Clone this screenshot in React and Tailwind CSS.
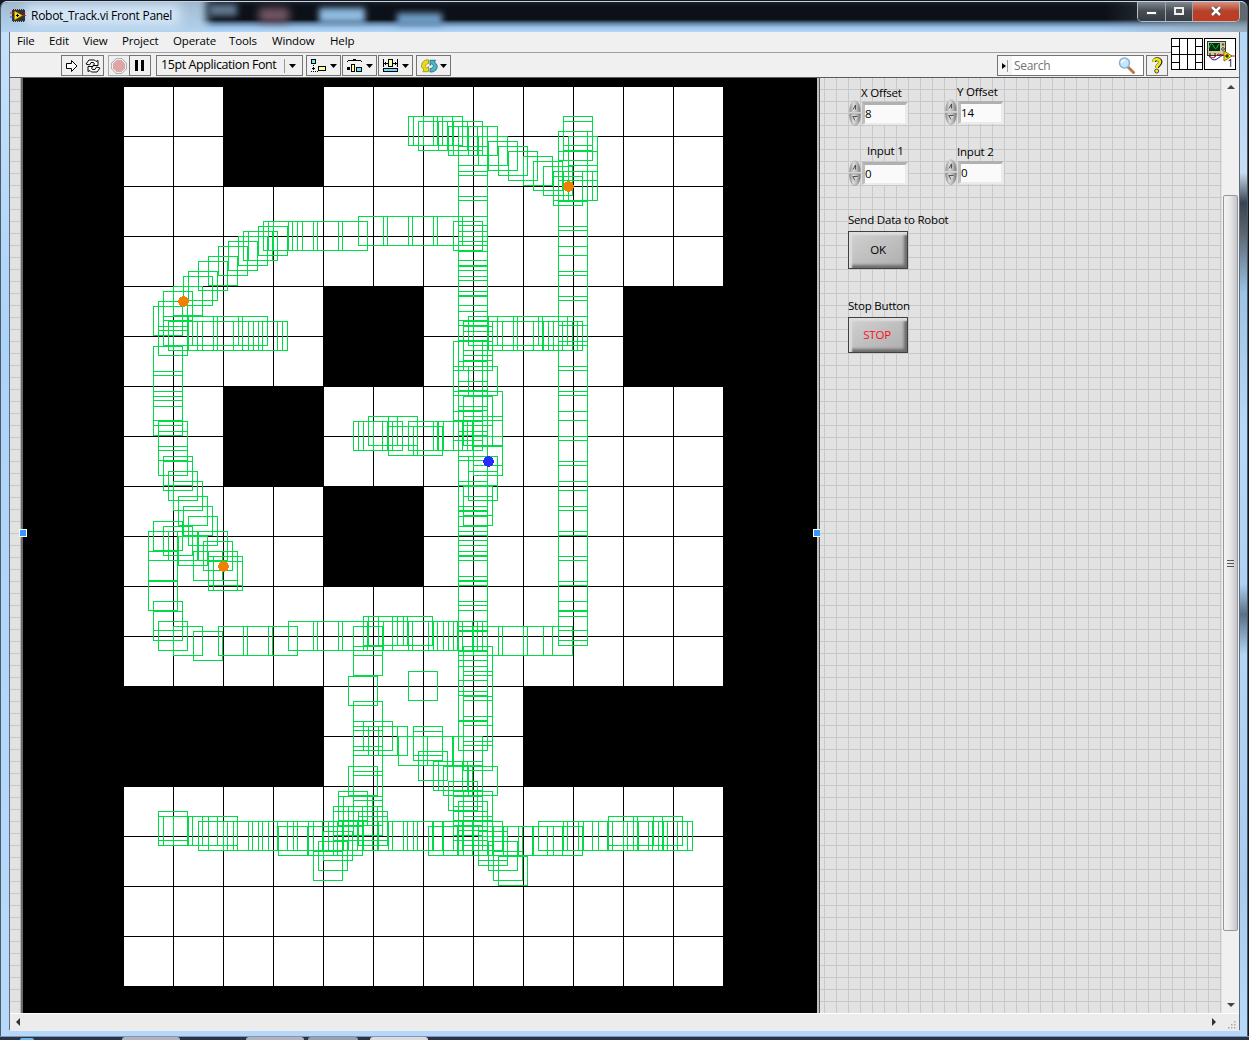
import React from "react";

const GREEN = "#00dc46";

// Rows of robot footprints sharing a top edge: [top, [left, ...]]
const rows = [
  [116, [408, 413, 423, 433, 563]],
  [121, [418, 438, 453, 563]],
  [126, [448, 453, 458, 468]],
  [131, [558, 563]],
  [136, [458, 478, 568]],
  [141, [488]],
  [146, [458, 498]],
  [151, [508, 558, 568]],
  [156, [523]],
  [161, [533]],
  [166, [543]],
  [171, [553, 558, 563, 568]],
  [176, [553]],
  [216, [358, 383, 408, 433, 458]],
  [221, [263, 268, 273, 288, 313, 338, 453]],
  [226, [258]],
  [231, [243, 248]],
  [236, [238]],
  [241, [228]],
  [246, [218]],
  [256, [208]],
  [261, [198]],
  [271, [188]],
  [276, [183]],
  [286, [173]],
  [291, [163]],
  [301, [158]],
  [306, [153]],
  [326, [158]],
  [316, [163, 188, 213, 238, 468, 488, 513, 538, 558]],
  [321, [168, 173, 188, 213, 233, 248, 253, 258, 463, 473, 488, 513, 533, 543, 548, 553]],
  [416, [368, 388]],
  [421, [353, 358, 363, 373, 408, 433, 438, 443, 453]],
  [426, [388, 413]],
  [471, [168]],
  [481, [173]],
  [496, [178]],
  [506, [183]],
  [516, [188]],
  [521, [153]],
  [526, [163]],
  [531, [148, 168, 198]],
  [536, [178]],
  [541, [203]],
  [551, [148, 193, 208]],
  [556, [208, 213]],
  [561, [208, 213]],
  [581, [148]],
  [601, [153]],
  [611, [153]],
  [616, [363, 368, 378, 403]],
  [621, [158, 288, 313, 338, 363, 383, 408, 428, 433, 443, 448, 453, 458]],
  [626, [173, 218, 243, 268, 353, 458, 473, 498, 523, 543]],
  [631, [193]],
  [646, [353]],
  [671, [408]],
  [676, [348]],
  [721, [363]],
  [726, [368, 378, 413]],
  [731, [413]],
  [736, [398, 423, 453]],
  [751, [418]],
  [761, [433, 438, 453]],
  [766, [348, 443, 468]],
  [781, [448]],
  [791, [338, 453, 463]],
  [796, [338, 343, 353, 453]],
  [801, [458]],
  [806, [333, 348, 353, 453]],
  [811, [158, 333, 358, 453, 458]],
  [816, [158, 163, 173, 188, 208, 358, 463, 608, 633, 653]],
  [821, [198, 208, 223, 233, 248, 258, 268, 293, 308, 313, 328, 333, 343, 348, 363, 378, 388, 403, 413, 433, 443, 453, 463, 473, 538, 563, 578, 583, 598, 608, 623, 633, 638, 648, 658, 663]],
  [826, [278, 308, 333, 428, 443, 458, 463, 478, 493, 503, 518, 533, 553]],
  [831, [323, 478]],
  [836, [478]],
  [841, [318, 488]],
  [851, [313, 493]],
  [856, [498]],
];

// Columns of footprints sharing a left edge: [left, [top, ...]]
const columns = [
  [153, [346, 371, 391, 396, 406]],
  [158, [421, 431, 446]],
  [163, [456, 461]],
  [353, [701, 721, 726, 746, 771]],
  [453, [341, 366, 391, 411]],
  [458, [171, 196, 231, 236, 241, 251, 266, 276, 291, 296, 311, 341, 361, 381, 391, 406, 431, 456, 481, 506, 511, 516, 526, 531, 551, 556, 576, 581, 601, 631, 651, 666, 691, 721]],
  [463, [326, 331, 341, 396, 416, 486, 496, 646, 671, 696, 716, 741]],
  [468, [366, 456, 471]],
  [473, [391, 416, 436, 446]],
  [558, [201, 226, 246, 271, 296, 341, 366, 391, 411, 436, 461, 481, 506, 531, 556, 581, 601, 611, 616]],
];

const footprints = [
  ...rows.flatMap(([y, xs]) => xs.map((x) => [x, y])),
  ...columns.flatMap(([x, ys]) => ys.map((y) => [x, y])),
];

const obstacles = [
  [223, 86, 101],
  [323, 286, 101],
  [623, 286, 101],
  [223, 386, 101],
  [323, 486, 101],
  [123, 686, 201],
  [523, 686, 201],
];

function TrackMap() {
  return (
    <svg width="794" height="935" viewBox="23 78 794 935" className="block shrink-0 bg-black" shapeRendering="crispEdges">
      <rect x="124" y="87" width="599" height="899" fill="#fff" />
      {Array.from({ length: 11 }, (_, i) => (
        <rect key={i} x={173 + i * 50} y="87" width="1" height="899" />
      ))}
      {Array.from({ length: 17 }, (_, i) => (
        <rect key={i} x="124" y={136 + i * 50} width="599" height="1" />
      ))}
      {obstacles.map(([x, y, w]) => (
        <rect key={x + "-" + y} x={x} y={y} width={w} height="101" />
      ))}
      {footprints.map(([x, y], i) => (
        <rect key={i} x={x + 0.5} y={y + 0.5} width="29" height="29" fill="none" stroke={GREEN} />
      ))}
      {[[183, 301], [568, 186], [223, 566]].map(([x, y]) => (
        <circle key={x} cx={x + 0.5} cy={y + 0.5} r="5.3" fill="#f08000" />
      ))}
      <circle cx="488.5" cy="461.5" r="5.3" fill="#2a2aff" />
    </svg>
  );
}

const canvasGrid =
  "bg-[#e2e2e2] bg-[linear-gradient(to_right,#c8c8c8_1px,transparent_1px),linear-gradient(to_bottom,#c8c8c8_1px,transparent_1px)] bg-[size:12px_12px]";

function Numeric({ label, value, box, labelBox }) {
  return (
    <>
      <div className={"absolute whitespace-nowrap " + labelBox}>{label}</div>
      <div className={"absolute flex h-[26px] w-[60px] " + box}>
        <svg width="14" height="26" viewBox="0 0 14 26" className="shrink-0">
          <defs>
            <linearGradient id="spin" x1="0" x2="1">
              <stop offset="0" stopColor="#8e8e8e" />
              <stop offset=".35" stopColor="#dcdcdc" />
              <stop offset=".65" stopColor="#bbb" />
              <stop offset="1" stopColor="#777" />
            </linearGradient>
          </defs>
          <path d="M1.5 12C1.5 5 4 .8 7 .8S12.500 5 12.500 12Z" fill="url(#spin)" stroke="#aaa" strokeWidth=".5" />
          <path d="M1.500 14C1.500 21 4 25.400 7 25.400S12.500 21 12.500 14Z" fill="url(#spin)" stroke="#888" strokeWidth=".5" />
          <path d="M5 9.500L7.500 5V9.500" fill="none" stroke="#444" strokeWidth=".9" />
          <path d="M4.500 16.500H9.500M5 17L7 20.500" fill="none" stroke="#444" strokeWidth=".9" />
          <path d="M7 20.500L9 17" stroke="#eee" strokeWidth=".8" />
        </svg>
        <div className="mt-[2px] h-[23px] w-[46px] border-t-[3px] border-r-[3px] border-b-[2px] border-l-[3px] border-t-[#b0b0b0] border-r-[#ebebeb] border-b-[#ebebeb] border-l-[#bdbdbd] bg-[#fafafa] leading-[17px]">
          {value}
        </div>
      </div>
    </>
  );
}

function PanelButton({ children, className }) {
  return (
    <button
      className={
        "absolute left-[28px] w-[60px] border border-[#404040] bg-gradient-to-br from-[#d2d2d2] to-[#adadad] text-center shadow-[inset_3px_3px_2px_#dedede,inset_-3px_-3px_3px_#6c6c6c] " +
        className
      }
    >
      {children}
    </button>
  );
}

function ToolButton({ className = "", children }) {
  return (
    <div className={"flex h-[21px] items-center justify-center border border-[#747474] bg-[#f0f0f0] " + className}>
      {children}
    </div>
  );
}

const Caret = () => (
  <svg width="7" height="4" viewBox="0 0 7 4" className="shrink-0"><path d="M0 0H7L3.500 4Z" /></svg>
);

const menus = [
  ["File", "w-[32px]"],
  ["Edit", "w-[34px]"],
  ["View", "w-[39px]"],
  ["Project", "w-[51px]"],
  ["Operate", "w-[56px]"],
  ["Tools", "w-[43px]"],
  ["Window", "w-[58px]"],
  ["Help", "w-[40px]"],
];

function Toolbar() {
  return (
    <div className="flex h-[24px] items-start pt-[2px] pl-[51px]">
      <ToolButton className="w-[22px]">
        <svg width="14" height="14" viewBox="0 0 14 14"><path d="M1.500 4.500H6.500V1.500L12 7L6.500 12.500V9.500H1.500Z" fill="#fff" stroke="#000" /></svg>
      </ToolButton>
      <ToolButton className="-ml-px w-[22px]">
        <svg width="16" height="14" viewBox="0 0 16 14" fill="#fff" stroke="#000">
          <path d="M1 5L4 1H9.500L11 2.500L13 1.500V6.500H8L9.500 5L8.500 3.500H6L4.500 6Z" />
          <path d="M15 9L12 13H6.500L5 11.500L3 12.500V7.500H8L6.500 9L7.500 10.500H10L11.500 8Z" />
        </svg>
      </ToolButton>
      <ToolButton className="ml-[4px] w-[22px] border-[#a8a8a8]">
        <svg width="16" height="16" viewBox="0 0 16 16">
          <path d="M5 .7H11L15.300 5V11L11 15.300H5L.7 11V5Z" fill="#fff" stroke="#a0a0a0" />
          <path d="M5.500 2H10.500L14 5.500V10.500L10.500 14H5.500L2 10.500V5.500Z" fill="#dda5a5" />
        </svg>
      </ToolButton>
      <ToolButton className="-ml-px w-[22px] gap-[3px] !pr-[2px]">
        <div className="h-[11px] w-[3px] bg-black" />
        <div className="h-[11px] w-[3px] bg-black" />
      </ToolButton>
      <ToolButton className="ml-[5px] w-[147px] !justify-start pl-[4px]">
        <span className="w-[123px] text-[12.500px] tracking-[-0.42px] whitespace-nowrap">15pt Application Font</span>
        <div className="mr-[4px] h-[14px] w-px bg-[#999]" />
        <Caret />
      </ToolButton>
      <ToolButton className="ml-[3px] w-[35px] gap-[2px]">
        <svg width="17" height="14" viewBox="0 0 17 14" shapeRendering="crispEdges" className="shrink-0">
          <rect x=".5" y=".5" width="4" height="4" fill="#6ee" stroke="#000" />
          <path d="M2 6h1v1h-1zM2 8h1v3h-1zM1 9h3v1H1zM0 12h1v1h-1zM2 12h1v1h-1zM4 12h1v1h-1zM6 12h1v1h-1z" />
          <rect x="7.500" y="7.500" width="7" height="4" fill="#ff9" stroke="#000" />
        </svg>
        <Caret />
      </ToolButton>
      <ToolButton className="ml-px w-[35px] gap-[2px]">
        <svg width="17" height="14" viewBox="0 0 17 14" shapeRendering="crispEdges" className="shrink-0">
          <path d="M0 2h1v-1h5v-1h3v1h5v1h1v1h-1v-1H1v1H0z" />
          <rect x="0" y="8" width="3" height="3" />
          <rect x="4.500" y="5.500" width="3" height="7" fill="#ff9" stroke="#000" />
          <rect x="9.500" y="8.500" width="5" height="4" fill="#6df" stroke="#000" />
        </svg>
        <Caret />
      </ToolButton>
      <ToolButton className="ml-px w-[35px] gap-[2px]">
        <svg width="17" height="14" viewBox="0 0 17 14" shapeRendering="crispEdges" className="shrink-0">
          <path d="M0 0h1v8H0zM14 0h1v8h-1zM1 4h4v1H1zM10 4h4v1h-4zM2 3h1v3H2zM12 3h1v3h-1z" />
          <rect x="5.500" y=".5" width="4" height="7" fill="#ff9" stroke="#000" />
          <rect x=".5" y="9.500" width="14" height="3" fill="#6df" stroke="#000" />
        </svg>
        <Caret />
      </ToolButton>
      <ToolButton className="ml-[3px] w-[35px] gap-[2px]">
        <svg width="17" height="14" viewBox="0 0 17 14" className="shrink-0">
          <path d="M7.500 .8C3 .5 0 4 .6 8L3 11L1.800 12.700H7.500V7.500L5.800 9C3.500 8 4 5 7.500 4.500Z" fill="#eadb1a" stroke="#9a8b00" strokeWidth=".8" />
          <path d="M9 13C14 13.500 17 10 16 6L13.500 3L14.500 1.300H9V6.500L10.800 4.800C13 6 13 9 9 9.500Z" fill="#4ab5c8" stroke="#126878" strokeWidth=".8" />
        </svg>
        <Caret />
      </ToolButton>
      <div className="ml-auto flex">
        <ToolButton className="w-[147px] !justify-start !bg-white">
          <div className="flex h-full w-[14px] shrink-0 items-center bg-[#f5f5f5] pl-[4px]">
            <svg width="4" height="6" viewBox="0 0 4 6"><path d="M0 0L4 3L0 6Z" /></svg>
            <div className="ml-px h-[12px] w-px bg-[#999]" />
          </div>
          <span className="ml-[2px] text-[12px] tracking-[-0.3px] text-[#737373]">Search</span>
          <svg width="18" height="17" viewBox="0 0 18 17" className="ml-auto mr-[7px]">
            <path d="M10.500 10.500L15.500 15.500" stroke="#b87a4a" strokeWidth="3" strokeLinecap="round" />
            <circle cx="6.500" cy="6" r="5" fill="#c4e8fb" stroke="#86b2d8" strokeWidth="1.500" />
            <path d="M3.500 6C3.500 4 5 3 7 3" stroke="#fff" fill="none" strokeWidth="1.500" />
          </svg>
        </ToolButton>
        <ToolButton className="ml-[2px] mr-[3px] w-[22px]">
          <svg width="12" height="17" viewBox="0 0 12 17">
            <path d="M3 5C3 1 9.500 1.500 9.500 5C9.500 7.500 6 8 6 11" stroke="#222" strokeWidth="4" fill="none" />
            <path d="M2.500 5C2.500 1 9 1.500 9 5C9 7.500 5.500 8 5.500 11" stroke="#f4ec10" strokeWidth="2.600" fill="none" />
            <circle cx="5.700" cy="14" r="2" fill="#f4ec10" stroke="#222" strokeWidth=".8" />
          </svg>
        </ToolButton>
      </div>
    </div>
  );
}

function TitleBar() {
  return (
    <div className="relative flex h-[31px] shrink-0 overflow-hidden rounded-t-[7px] border-t border-[#c8d4e0] bg-[linear-gradient(to_bottom,#1a2028_0,#0c1119_15%,#0c1119_58%,#6485a6_72%,#9cc2e8_85%,#b4d8fa_100%)]">
      <div className="absolute -left-4 -top-2 h-[48px] w-[222px] bg-gradient-to-b from-[#9db4c9] to-[#b9daf8] blur-[4px]" />
      <div className="absolute left-[24px] top-[3px] h-[20px] w-[155px] bg-[#d6e8f8] blur-[6px]" />
      <div className="absolute left-[208px] top-[2px] h-[12px] w-[28px] bg-[#60788f] blur-[3px]" />
      <div className="absolute left-[258px] top-[6px] h-[14px] w-[30px] bg-[#785868] blur-[4px]" />
      <div className="absolute left-[318px] top-[6px] h-[15px] w-[46px] bg-[#8fbbe2] blur-[3px]" />
      <div className="absolute left-[396px] top-[11px] h-[13px] w-[45px] bg-[#6f9cc4] blur-[3px]" />
      <div className="absolute -right-2 top-0 h-[31px] w-[150px] bg-gradient-to-r from-transparent to-[#8f989f] opacity-70" />
      <svg width="16" height="16" viewBox="0 0 16 16" className="relative ml-[9px] mt-[6px] shrink-0">
        <rect x="2" y="1" width="13" height="13" fill="#333" />
        <path d="M2 1.500H15M2 13.500H15" stroke="#bbb" strokeDasharray="1 1" />
        <path d="M4.500 3L12.500 7.500L4.500 12Z" fill="#ffe600" stroke="#907800" strokeWidth=".5" />
        <path d="M0 5H4M12 7.500H16" stroke="#e02020" />
        <path d="M0 9H4" stroke="#2050e0" />
        <path d="M6 7.500H9M7.500 6V9" stroke="#000" />
      </svg>
      <div className="relative ml-[5px] mt-[5px] text-[12px] leading-[18px] tracking-[-0.28px] whitespace-nowrap">Robot_Track.vi Front Panel</div>
      <div className="relative ml-auto mr-[7px] -mt-px flex h-[21px] overflow-hidden rounded-b-[5px] border border-t-0 border-[#b8bcc4]">
        <div className="flex w-[28px] items-center justify-center border-r border-[#a0a4ac] bg-gradient-to-b from-[#8b9097] via-[#474d55] via-50% to-[#363c46]">
          <div className="mt-[4px] h-[4px] w-[11px] border border-[#555] bg-white" />
        </div>
        <div className="flex w-[27px] items-center justify-center border-r border-[#a0a4ac] bg-gradient-to-b from-[#8b9097] via-[#474d55] via-50% to-[#363c46]">
          <div className="h-[8px] w-[10px] border-2 border-[#eee] bg-[#555]" />
        </div>
        <div className="flex w-[46px] items-center justify-center bg-gradient-to-b from-[#d49a8d] via-[#b8402a] via-50% to-[#c03a20]">
          <svg width="12" height="10" viewBox="0 0 12 10"><path d="M2 1L10 9M10 1L2 9" stroke="#444" strokeWidth="4" /><path d="M2 1L10 9M10 1L2 9" stroke="#fff" strokeWidth="2.500" /></svg>
        </div>
      </div>
    </div>
  );
}

function HeaderIcons() {
  return (
    <div className="flex w-[68px] shrink-0 gap-px pt-[6px]">
      <svg width="32" height="32" viewBox="0 0 32 32" shapeRendering="crispEdges" className="shrink-0">
        <rect x=".5" y=".5" width="31" height="31" fill="#fff" stroke="#000" />
        <path d="M8.500 0V32M16.500 0V32M24.500 0V32M0 16.500H32M0 8.500H8M0 24.500H8M24 8.500H32M24 24.500H32" stroke="#000" />
      </svg>
      <svg width="32" height="32" viewBox="0 0 32 32" className="shrink-0">
        <rect x=".5" y=".5" width="31" height="31" fill="#fff" stroke="#000" />
        <rect x="3.500" y="3.500" width="18" height="14" fill="#d0cf9c" stroke="#333" />
        <rect x="5" y="5" width="11" height="8" fill="#022d12" />
        <path d="M5 10C7 4 8 5 10 9S13 9 15 6" fill="none" stroke="#19c84b" />
        <circle cx="19" cy="6.500" r="1.300" fill="#555" /><circle cx="19" cy="11" r="1.300" fill="#fff" stroke="#333" />
        <path d="M6 15V19M11 15V19" stroke="#111" />
        <path d="M5 18Q9 24 13 21T19 17" fill="none" stroke="#1b20b5" />
        <path d="M6 19L10 20L14 16L20 17M27 18H31" fill="none" stroke="#e01717" />
        <path d="M20 13L28 18L20 23Z" fill="#ffec19" stroke="#807000" />
        <path d="M21 18H25M23 16V20" stroke="#000" />
        <text x="23.500" y="29" fontSize="10" fill="#000" fontFamily="Open Sans, sans-serif">1</text>
      </svg>
    </div>
  );
}

function VerticalScroll() {
  return (
    <div className="flex h-full w-[17px] shrink-0 flex-col items-center bg-[#f0f0f0]">
      <svg width="8" height="4" viewBox="0 0 8 4" className="mt-[7px] shrink-0"><path d="M0 4L4 0L8 4Z" fill="#444" /></svg>
      <div className="mt-[106px] flex h-[736px] w-[15px] shrink-0 flex-col items-center justify-center gap-[2px] rounded-[2px] border border-[#979797] bg-gradient-to-r from-[#f5f5f5] via-[#e6e6e8] to-[#c4c5ca]">
        <div className="h-px w-[7px] bg-[#555]" />
        <div className="h-px w-[7px] bg-[#555]" />
        <div className="h-px w-[7px] bg-[#555]" />
      </div>
      <svg width="8" height="4" viewBox="0 0 8 4" className="mt-auto mb-[6px] shrink-0"><path d="M0 0L4 4L8 0Z" fill="#444" /></svg>
    </div>
  );
}

const Handle = ({ className }) => (
  <div className={"absolute top-[451px] h-[8px] w-[8px] border border-white bg-[#3399ff] " + className} />
);

export default function App() {
  return (
    <div className="flex h-[1040px] w-[1249px] flex-col overflow-hidden bg-[#121925] font-['Open_Sans',sans-serif] text-[11.500px] text-black">
      <div className="mt-px flex h-[1035px] w-[1248px] flex-col rounded-t-[7px] border-r border-l border-[#4c5967] bg-[#b4d7fa]">
        <TitleBar />
        <div className="flex min-h-0 flex-1">
          <div className="w-[8px] shrink-0 bg-gradient-to-b from-[#c6e0fa] via-[#acd3f8] via-30% to-[#b8dafa]" />
          <div className="-mt-px flex h-[999px] w-[1231px] shrink-0 flex-col border border-[#5e6e7e] bg-[#f0f0f0]">
            <div className="flex h-[46px] shrink-0 border-b border-[#5c5c5c]">
              <div className="w-[1161px] shrink-0">
                <div className="flex h-[21px] items-center border-b border-[#a0a0a0] pb-[2px] pl-[7px] tracking-[-0.15px]">
                  {menus.map(([name, width]) => (
                    <div key={name} className={"shrink-0 whitespace-nowrap " + width}>{name}</div>
                  ))}
                </div>
                <Toolbar />
              </div>
              <HeaderIcons />
            </div>
            <div className="flex h-[935px] shrink-0">
              <div className="relative flex w-[810px] shrink-0">
                <div className="w-[10px] shrink-0 bg-[#e2e2e2] bg-[linear-gradient(to_bottom,#c8c8c8_1px,transparent_1px)] bg-[size:12px_12px] bg-[position:0_11px]" />
                <div className="w-px bg-[#b8b8b8]" />
                <div className="w-[2px] bg-[#6a6a6a]" />
                <TrackMap />
                <div className="w-[2px] bg-[#c0c0c0]" />
                <div className="w-px bg-[#5a5a5a]" />
                <Handle className="left-[9px]" />
                <Handle className="left-[803px]" />
              </div>
              <div className={"relative w-[402px] shrink-0 text-[11.500px] leading-[16px] tracking-[-0.2px] bg-[position:4px_11px] " + canvasGrid}>
                <Numeric label="X Offset" value="8" labelBox="left-[41px] top-[7px]" box="left-[28px] top-[22px]" />
                <Numeric label="Y Offset" value="14" labelBox="left-[137px] top-[6px]" box="left-[124px] top-[21px]" />
                <Numeric label="Input 1" value="0" labelBox="left-[47px] top-[65px]" box="left-[28px] top-[82px]" />
                <Numeric label="Input 2" value="0" labelBox="left-[137px] top-[66px]" box="left-[124px] top-[81px]" />
                <div className="absolute left-[28px] top-[134px] whitespace-nowrap">Send Data to Robot</div>
                <PanelButton className="top-[153px] h-[38px]">OK</PanelButton>
                <div className="absolute left-[28px] top-[220px] whitespace-nowrap">Stop Button</div>
                <PanelButton className="top-[239px] h-[36px] pr-[2px] text-[#ff0a1e]">STOP</PanelButton>
              </div>
              <VerticalScroll />
            </div>
            <div className="flex flex-1 items-center border-t border-white bg-[#ececec] pb-[2px] pl-[6px]">
              <svg width="4" height="8" viewBox="0 0 4 8"><path d="M4 0L0 4L4 8Z" fill="#333" /></svg>
              <svg width="4" height="8" viewBox="0 0 4 8" className="ml-auto"><path d="M0 0L4 4L0 8Z" fill="#333" /></svg>
              <svg width="8" height="8" viewBox="0 0 8 8" className="mr-[3px] ml-[12px] mt-[7px]" fill="#aaa">
                <path d="M6 0h1.500v1.500H6zM3 3h1.500v1.500H3zM6 3h1.500v1.500H6zM0 6h1.500v1.500H0zM3 6h1.500v1.500H3zM6 6h1.500v1.500H6z" />
              </svg>
            </div>
          </div>
          <div className="flex-1 bg-[linear-gradient(to_bottom,#b4d7fa_0,#c9def3_14%,#3a4450_17%,#5b6570_20%,#9cc4e6_26%,#b8dafa_40%,#aed2f5_55%,#5a7085_58%,#b2d6f8_62%,#a9cdf0_85%,#b8dafa_100%)]" />
        </div>
      </div>
      <div className="flex h-[4px] items-end border-t border-[#8a94a4] bg-[#26344d] pl-[20px]">
        <div className="h-[2px] w-[14px] rounded-t-full bg-[#68b7e4]" />
        <div className="ml-[88px] h-[3px] w-[58px] rounded-t-sm bg-[#aeb4c2]" />
        <div className="ml-[66px] h-[3px] w-[58px] rounded-t-sm bg-[#aeb4c2]" />
        <div className="ml-[4px] h-[3px] w-[50px] rounded-t-sm bg-[#9aa2b2]" />
        <div className="ml-[12px] h-[3px] w-[58px] rounded-t-sm bg-[#d8dbe2]" />
      </div>
    </div>
  );
}
